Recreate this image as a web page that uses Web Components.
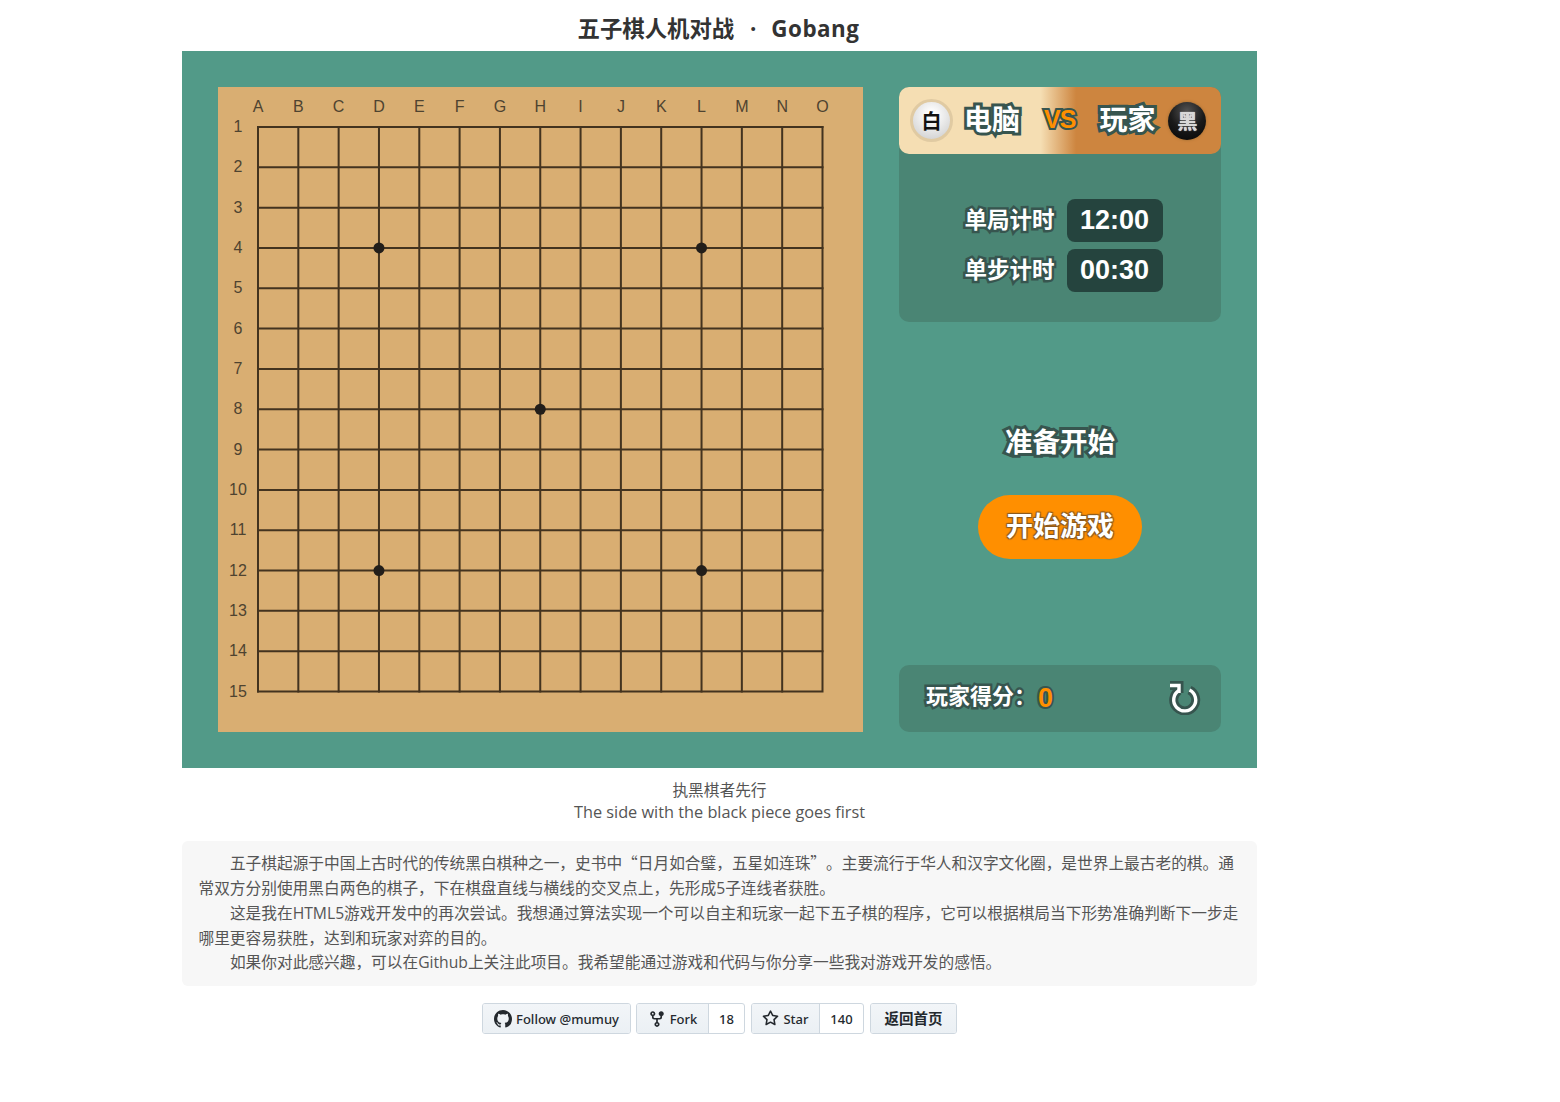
<!DOCTYPE html>
<html lang="zh-CN">
<head>
<meta charset="utf-8">
<title>五子棋人机对战</title>
<style>
  html, body { margin: 0; background: #fff; }
  body {
    font-family: "Open Sans", "Noto Sans CJK SC", sans-serif;
    color: #555;
  }
  .q { font-family: "Noto Sans CJK SC", sans-serif; }
</style>
</head>
<body>
<gobang-page>
  <game-stage>
    <go-board></go-board>
    <side-panel></side-panel>
  </game-stage>
  <game-caption></game-caption>
  <game-intro>
    <p>五子棋起源于中国上古时代的传统黑白棋种之一，史书中<span class="q">“</span>日月如合璧，五星如连珠<span class="q">”</span>。主要流行于华人和汉字文化圈，是世界上最古老的棋。通<br>常双方分别使用黑白两色的棋子，下在棋盘直线与横线的交叉点上，先形成5子连线者获胜。</p>
    <p>这是我在HTML5游戏开发中的再次尝试。我想通过算法实现一个可以自主和玩家一起下五子棋的程序，它可以根据棋局当下形势准确判断下一步走哪里更容易获胜，达到和玩家对弈的目的。</p>
    <p>如果你对此感兴趣，可以在Github上关注此项目。我希望能通过游戏和代码与你分享一些我对游戏开发的感悟。</p>
  </game-intro>
  <link-bar></link-bar>
</gobang-page>

<script>
class GobangPage extends HTMLElement {
  connectedCallback() {
    this.attachShadow({ mode: 'open' }).innerHTML = `
      <style>
        :host { display: block; width: 1075px; margin-left: 182px; }
        h1 {
          margin: 0; height: 51px; line-height: 57px; text-align: center; padding-right: 2px;
          font-size: 22.4px; font-weight: 700; color: #333;
        }
        .dot { margin: 0 9px 0 10px; }
        .en { letter-spacing: .5px; }
      </style>
      <h1>五子棋人机对战 <span class="dot">·</span> <span class="en">Gobang</span></h1>
      <slot></slot>
    `;
  }
}

class GameCaption extends HTMLElement {
  connectedCallback() {
    this.attachShadow({ mode: 'open' }).innerHTML = `
      <style>
        :host {
          display: block; height: 73px; box-sizing: border-box; padding-top: 11px; text-align: center;
          font-size: 15.7px; line-height: 22px; color: #555;
        }
        .en { font-size: 16.3px; }
      </style>
      执黑棋者先行<br><span class="en">The side with the black piece goes first</span>
    `;
  }
}

class GameStage extends HTMLElement {
  connectedCallback() {
    this.attachShadow({ mode: 'open' }).innerHTML = `
      <style>
        :host {
          display: flex; gap: 36px; padding: 36px; height: 717px; box-sizing: border-box;
          background: #529a88;
        }
      </style>
      <slot></slot>
    `;
  }
}

class GoBoard extends HTMLElement {
  connectedCallback() {
    const step = 564.5 / 14, ox = 40, oy = 40;
    let lines = '', labels = '';
    for (let i = 0; i < 15; i++) {
      const p = i * step;
      lines += `<path d="M${ox + p} ${oy}V${oy + 564.5}M${ox} ${oy + p}H${ox + 564.5}"/>`;
      labels += `<text x="${ox + p}" y="24.5">${'ABCDEFGHIJKLMNO'[i]}</text>`;
      labels += `<text x="20" y="${oy + p + 5}">${i + 1}</text>`;
    }
    const stars = [[3, 3], [11, 3], [7, 7], [3, 11], [11, 11]]
      .map(([x, y]) => `<circle cx="${ox + x * step}" cy="${oy + y * step}" r="5.5"/>`).join('');
    this.attachShadow({ mode: 'open' }).innerHTML = `
      <style>
        :host { display: block; width: 645px; height: 645px; flex: none; background: #d9ae72; }
        svg { display: block; }
        .grid { stroke: #43331f; stroke-width: 2; fill: none; stroke-linecap: square; }
        text { font: 16px "Liberation Sans", Arial, sans-serif; fill: #4e4330; text-anchor: middle; }
        circle { fill: #221e1a; }
      </style>
      <svg width="645" height="645" viewBox="0 0 645 645">
        <g class="grid">${lines}</g>
        ${labels}
        ${stars}
      </svg>
    `;
  }
}

class SidePanel extends HTMLElement {
  connectedCallback() {
    this.attachShadow({ mode: 'open' }).innerHTML = `
      <style>
        :host {
          display: flex; flex-direction: column; width: 322px; height: 645px; flex: none;
          font-family: "Liberation Sans", "Noto Sans CJK SC", sans-serif; font-weight: 700; color: #fff;
        }
        .card { background: #4a8574; border-radius: 10px; }
        .ol { -webkit-text-stroke: 6px #37554f; paint-order: stroke fill; }
        .players {
          display: flex; align-items: center; height: 67px; box-sizing: border-box; padding: 0 14px 0 11px;
          border-radius: 10px;
          background: linear-gradient(to right, #f5deb3 44%, #cd853f 55%);
        }
        .stone {
          border-radius: 50%; flex: none; box-sizing: border-box;
          display: flex; align-items: center; justify-content: center; font-size: 20px;
        }
        .white {
          width: 43px; height: 43px;
          background: radial-gradient(circle at 50% 35%, #fff 10%, #cfcfcf 90%);
          border: 3px solid #e0caa2; color: #111;
        }
        .black {
          width: 38px; height: 38px;
          background: radial-gradient(circle at 50% 25%, #505050 3%, #1a1a1a 50%, #090909 90%);
          box-shadow: 0 0 3px #9a6a30; color: #d8d8d8; text-shadow: 0 0 1px #fff;
        }
        .name { font-size: 28px; line-height: 1; }
        .vs {
          font-size: 25px; color: #ff8f00; letter-spacing: -1px; -webkit-text-stroke-width: 4px;
          margin: 0 24px 0 24px; line-height: 1; position: relative; top: -1px;
        }
        .name.left { margin-left: 11px; }
        .name.right { margin-right: 13px; }
        .spacer { flex: 1; }
        .timers {
          display: grid; grid-template-columns: max-content 96px; gap: 7.5px 12px;
          justify-content: center; align-items: center; padding: 45px 0 0 7px; height: 168px;
          box-sizing: border-box; align-content: start;
        }
        .label { font-size: 22.5px; line-height: 38px; margin-top: 2px; -webkit-text-stroke-width: 5px; }
        .clock {
          height: 42.5px; line-height: 43.5px; border-radius: 8px; background: #25443e;
          text-align: center; font-size: 27px;
        }
        .middle {
          flex: 1; display: flex; flex-direction: column; align-items: center; padding-top: 100px;
        }
        .status { font-size: 27.5px; line-height: 42px; }
        .start {
          margin-top: 31px; width: 163.4px; height: 64px; line-height: 64px; text-align: center;
          border-radius: 32px; background: #ff8f00; font-size: 27px;
          text-shadow: 1px 1px 1px #8a5a20, -1px -1px 1px #8a5a20, 1px -1px 1px #8a5a20, -1px 1px 1px #8a5a20;
        }
        .score {
          display: flex; align-items: center; height: 67px; padding: 0 20px 0 27px;
        }
        .score .t { font-size: 22px; line-height: 28px; margin-top: -3px; -webkit-text-stroke-width: 5px; }
        .score .n { font-size: 27px; line-height: 28px; margin-top: -2px; color: #ff8f00; margin-left: 2px; -webkit-text-stroke-width: 4px; }
        .score svg { margin-top: -3px; }
        svg { display: block; }
      </style>
      <div class="card">
        <div class="players">
          <div class="stone white">白</div>
          <div class="name left ol">电脑</div>
          <div class="vs ol">VS</div>
          <div class="name right ol">玩家</div>
          <div class="stone black">黑</div>
        </div>
        <div class="timers">
          <div class="label ol">单局计时</div><div class="clock">12:00</div>
          <div class="label ol">单步计时</div><div class="clock">00:30</div>
        </div>
      </div>
      <div class="middle">
        <div class="status ol">准备开始</div>
        <div class="start">开始游戏</div>
      </div>
      <div class="card score">
        <span class="t ol">玩家得分：</span><span class="n ol">0</span>
        <span class="spacer"></span>
        <svg width="36" height="36" viewBox="0 0 36 36" fill="none" stroke-linejoin="miter">
          <g stroke="#36544e" stroke-width="9">
            <path d="M14 11.5A11 11 0 1 0 24.5 11"/><path d="M5 6.5H14V14"/>
          </g>
          <g stroke="#fff" stroke-width="3.4">
            <path d="M14 11.5A11 11 0 1 0 24.5 11"/><path d="M5 6.5H14V14"/>
          </g>
        </svg>
      </div>
    `;
  }
}

class GameIntro extends HTMLElement {
  connectedCallback() {
    this.attachShadow({ mode: 'open' }).innerHTML = `
      <style>
        :host {
          display: block; background: #f7f7f7; border-radius: 6px; box-sizing: border-box;
          height: 145px; padding: 10.4px 16.5px; font-size: 15.7px; line-height: 24.7px; color: #555;
          text-spacing-trim: space-all;
        }
        ::slotted(p) { margin: 0; text-indent: 2em; }
      </style>
      <slot></slot>
    `;
  }
}

class LinkBar extends HTMLElement {
  connectedCallback() {
    const icons = {
      github: 'M8 0C3.58 0 0 3.58 0 8c0 3.54 2.29 6.53 5.47 7.59.4.07.55-.17.55-.38 0-.19-.01-.82-.01-1.49-2.01.37-2.53-.49-2.69-.94-.09-.23-.48-.94-.82-1.13-.28-.15-.68-.52-.01-.53.63-.01 1.08.58 1.23.82.72 1.21 1.87.87 2.33.66.07-.52.28-.87.51-1.07-1.78-.2-3.64-.89-3.64-3.95 0-.87.31-1.59.82-2.15-.08-.2-.36-1.02.08-2.12 0 0 .67-.21 2.2.82.64-.18 1.32-.27 2-.27.68 0 1.36.09 2 .27 1.53-1.04 2.2-.82 2.2-.82.44 1.1.16 1.92.08 2.12.51.56.82 1.27.82 2.15 0 3.07-1.87 3.75-3.65 3.95.29.25.54.73.54 1.48 0 1.07-.01 1.93-.01 2.2 0 .21.15.46.55.38A8.013 8.013 0 0016 8c0-4.42-3.58-8-8-8z',
      fork: 'M5 3.25a.75.75 0 11-1.5 0 .75.75 0 011.5 0zm0 2.122a2.25 2.25 0 10-1.5 0v.878A2.25 2.25 0 005.75 8.5h1.5v2.128a2.251 2.251 0 101.5 0V8.5h1.5a2.25 2.25 0 002.25-2.25v-.878a2.25 2.25 0 10-1.5 0v.878a.75.75 0 01-.75.75h-4.5A.75.75 0 015 6.25v-.878zm3.75 7.378a.75.75 0 11-1.5 0 .75.75 0 011.5 0zm3-8.75a.75.75 0 100-1.5.75.75 0 000 1.5z',
      star: 'M8 .25a.75.75 0 01.673.418l1.882 3.815 4.21.612a.75.75 0 01.416 1.279l-3.046 2.97.719 4.192a.75.75 0 01-1.088.791L8 12.347l-3.766 1.98a.75.75 0 01-1.088-.79l.72-4.194L.818 6.374a.75.75 0 01.416-1.28l4.21-.611L7.327.668A.75.75 0 018 .25zm0 2.445L6.615 5.5a.75.75 0 01-.564.41l-3.097.45 2.24 2.184a.75.75 0 01.216.664l-.528 3.084 2.769-1.456a.75.75 0 01.698 0l2.77 1.456-.53-3.084a.75.75 0 01.216-.664l2.24-2.183-3.096-.45a.75.75 0 01-.564-.41L8 2.694v.001z'
    };
    const icon = (name, size) => `<svg width="${size}" height="${size}" viewBox="0 0 16 16" fill="#24292e"><path d="${icons[name]}"/></svg>`;
    this.attachShadow({ mode: 'open' }).innerHTML = `
      <style>
        :host {
          display: flex; justify-content: center; gap: 5px; margin-top: 17px; height: 31px;
          font: 500 13px "Noto Sans", "Noto Sans CJK SC", sans-serif; color: #24292e;
        }
        .btn {
          display: flex; align-items: center; box-sizing: border-box; height: 31px; flex: none;
          border: 1px solid #ced7df; border-radius: 3px; overflow: hidden; background: #fff;
        }
        .btn + .btn + .btn { margin-left: 1px; }
        .main {
          display: flex; align-items: center; justify-content: center; gap: 4px; height: 100%;
          background: linear-gradient(#f2f5f8, #ebf0f4);
        }
        .count { flex: 1; height: 100%; text-align: center; border-left: 1px solid #ced7df; line-height: 31px; }
        .home { font-weight: 700; font-size: 14.5px; }
        .home .main { padding-bottom: 2px; box-sizing: border-box; }
      </style>
      <div class="btn" style="width:149px"><div class="main" style="width:100%">${icon('github', 18)}Follow @mumuy</div></div>
      <div class="btn" style="width:109px"><div class="main" style="width:71px">${icon('fork', 18)}Fork</div><div class="count">18</div></div>
      <div class="btn" style="width:113px"><div class="main" style="width:67px">${icon('star', 17)}Star</div><div class="count">140</div></div>
      <div class="btn home" style="width:87px"><div class="main" style="width:100%">返回首页</div></div>
    `;
  }
}

customElements.define('gobang-page', GobangPage);
customElements.define('game-stage', GameStage);
customElements.define('game-caption', GameCaption);
customElements.define('go-board', GoBoard);
customElements.define('side-panel', SidePanel);
customElements.define('game-intro', GameIntro);
customElements.define('link-bar', LinkBar);
</script>
</body>
</html>
